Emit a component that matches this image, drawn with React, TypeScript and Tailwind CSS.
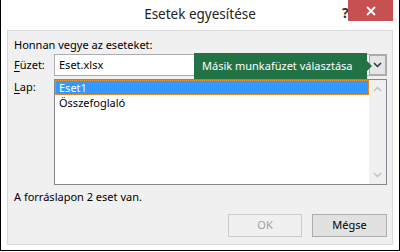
import React from "react";

const font = { fontFamily: '"Noto Sans", "Open Sans", sans-serif' };

export default function App() {
  return (
    <div className="w-[400px] h-[252px] bg-white">
      <div
        className="relative w-[400px] h-[251px] bg-white border-l border-r border-b border-black flex flex-col text-[11px] text-black"
        style={font}
      >
        {/* Title bar */}
        <div className="relative h-[30px] flex items-center justify-center">
          <span className="text-[13.5px] text-[#222] leading-none -mt-[1px]">Esetek egyesítése</span>
          <span className="absolute left-[341px] top-[3px] text-[14px] font-bold text-[#333] leading-[20px]">?</span>
          <div className="absolute left-[347px] top-0 w-[45px] h-[21px] bg-[#c75050] flex items-center justify-center">
            <svg width="10" height="10" viewBox="0 0 10 10">
              <path d="M1 1 L9 9 M9 1 L1 9" stroke="white" strokeWidth="1.8" />
            </svg>
          </div>
        </div>

        {/* Panel */}
        <div className="relative mx-[6px] h-[215px] bg-[#f0f0f0] border border-[#dadada] flex flex-col pl-[6px] pr-[5px]">
          <div className="mt-[6px] h-[16px] leading-[16px] whitespace-nowrap">Honnan vegye az eseteket:</div>

          {/* Füzet row */}
          <div className="mt-[1px] flex items-center h-[22px]">
            <div className="w-[40px] leading-[16px]">
              <span className="underline underline-offset-2">F</span>üzet:
            </div>
            <div className="flex-1 h-[22px] bg-white border border-[#abadb3] flex items-center">
              <span className="pl-[4px] flex-1 leading-[16px]">Eset.xlsx</span>
              <div className="w-[17px] h-[20px] bg-[#e5e5e5] border border-[#acacac] flex items-center justify-center">
                <svg width="9" height="6" viewBox="0 0 9 6">
                  <path d="M1 1 L4.5 4.5 L8 1" stroke="#333" strokeWidth="1.5" fill="none" />
                </svg>
              </div>
            </div>
          </div>

          {/* Lap row */}
          <div className="mt-[3px] flex">
            <div className="w-[40px] leading-[16px]">
              <span className="underline underline-offset-2">L</span>ap:
            </div>
            <div className="flex-1 h-[106px] bg-white border border-[#828790] flex">
              <div className="flex-1 flex flex-col">
                <div className="h-[15px] bg-[#3399ff] border border-dotted border-[#f39c34] text-white leading-[13px] pl-[3px]">
                  Eset1
                </div>
                <div className="h-[15px] leading-[15px] pl-[4px]">Összefoglaló</div>
              </div>
              <div className="w-[17px] bg-[#f0f0f0] flex flex-col items-center justify-between py-[6px]">
                <svg width="9" height="6" viewBox="0 0 9 6">
                  <path d="M1 5 L4.5 1.5 L8 5" stroke="#c2c2c2" strokeWidth="1.5" fill="none" />
                </svg>
                <svg width="9" height="6" viewBox="0 0 9 6">
                  <path d="M1 1 L4.5 4.5 L8 1" stroke="#c2c2c2" strokeWidth="1.5" fill="none" />
                </svg>
              </div>
            </div>
          </div>

          <div className="mt-[4px] h-[16px] leading-[16px] whitespace-nowrap">A forráslapon 2 eset van.</div>

          {/* Buttons */}
          <div className="mt-[9px] flex justify-end gap-[10px]">
            <div className="w-[74px] h-[23px] border border-[#cccccc] bg-[#f0f0f0] text-[#a0a0a0] flex items-center justify-center">
              OK
            </div>
            <div className="w-[75px] h-[23px] border border-[#adadad] bg-[#e1e1e1] flex items-center justify-center">
              Mégse
            </div>
          </div>

          {/* Tooltip */}
          <div className="absolute left-[186px] top-[22px] w-[173px] h-[26px] bg-[#217346] text-white text-[11px] flex items-center pl-[8px] whitespace-nowrap">
            Másik munkafüzet választása
            <div className="absolute right-[-5px] top-[8px] w-0 h-0 border-t-[5px] border-b-[5px] border-l-[5px] border-t-transparent border-b-transparent border-l-[#217346]" />
          </div>
        </div>
      </div>
    </div>
  );
}
